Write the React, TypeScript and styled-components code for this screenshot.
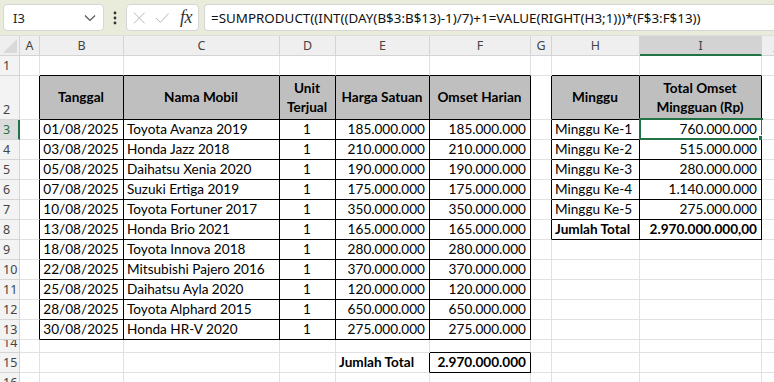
import styled, { createGlobalStyle } from "styled-components";

const GlobalStyle = createGlobalStyle`
  html, body {
    margin: 0;
    padding: 0;
    background: #fff;
    overflow: hidden;
  }
`

type CellData = {
  v: string
  align?: "left" | "center" | "right"
  bold?: boolean
  fill?: boolean
}

const COLS = ["A", "B", "C", "D", "E", "F", "G", "H", "I", "J"]
const COL_WIDTHS = [20, 84, 156, 56, 94, 101, 21, 88, 122, 30]
const ROWS = [1, 2, 3, 4, 5, 6, 7, 8, 9, 10, 11, 12, 13, 14, 15, 16]
const ROW_HEIGHT: Record<number, number> = { 2: 44, 14: 13 }

const sales = [
  ["01/08/2025", "Toyota Avanza 2019", "185.000.000"],
  ["03/08/2025", "Honda Jazz 2018", "210.000.000"],
  ["05/08/2025", "Daihatsu Xenia 2020", "190.000.000"],
  ["07/08/2025", "Suzuki Ertiga 2019", "175.000.000"],
  ["10/08/2025", "Toyota Fortuner 2017", "350.000.000"],
  ["13/08/2025", "Honda Brio 2021", "165.000.000"],
  ["18/08/2025", "Toyota Innova 2018", "280.000.000"],
  ["22/08/2025", "Mitsubishi Pajero 2016", "370.000.000"],
  ["25/08/2025", "Daihatsu Ayla 2020", "120.000.000"],
  ["28/08/2025", "Toyota Alphard 2015", "650.000.000"],
  ["30/08/2025", "Honda HR-V 2020", "275.000.000"],
]

const weekly = [
  ["Minggu Ke-1", "760.000.000"],
  ["Minggu Ke-2", "515.000.000"],
  ["Minggu Ke-3", "280.000.000"],
  ["Minggu Ke-4", "1.140.000.000"],
  ["Minggu Ke-5", "275.000.000"],
]

const cells: Record<string, CellData> = {
  B2: { v: "Tanggal", align: "center", bold: true, fill: true },
  C2: { v: "Nama Mobil", align: "center", bold: true, fill: true },
  D2: { v: "Unit Terjual", align: "center", bold: true, fill: true },
  E2: { v: "Harga Satuan", align: "center", bold: true, fill: true },
  F2: { v: "Omset Harian", align: "center", bold: true, fill: true },
  H2: { v: "Minggu", align: "center", bold: true, fill: true },
  I2: { v: "Total Omset Mingguan (Rp)", align: "center", bold: true, fill: true },
  E15: { v: "Jumlah Total", align: "left", bold: true },
  F15: { v: "2.970.000.000", align: "right", bold: true },
  H8: { v: "Jumlah Total", align: "left", bold: true },
  I8: { v: "2.970.000.000,00", align: "right", bold: true },
}

sales.forEach((s, i) => {
  const r = i + 3
  cells["B" + r] = { v: s[0], align: "center" }
  cells["C" + r] = { v: s[1], align: "left" }
  cells["D" + r] = { v: "1", align: "center" }
  cells["E" + r] = { v: s[2], align: "right" }
  cells["F" + r] = { v: s[2], align: "right" }
})

weekly.forEach((w, i) => {
  const r = i + 3
  cells["H" + r] = { v: w[0], align: "left" }
  cells["I" + r] = { v: w[1], align: "right" }
})

// ranges that carry a thin black border
const boxes = [
  { c1: 1, c2: 5, r1: 2, r2: 13 },
  { c1: 5, c2: 5, r1: 15, r2: 15 },
  { c1: 7, c2: 8, r1: 2, r2: 8 },
]

function boxed(c: number, r: number) {
  return boxes.some((b) => c >= b.c1 && c <= b.c2 && r >= b.r1 && r <= b.r2)
}

const GRID = "#e1e1e1"
const INK = "#000"

export default function App() {
  return (
    <>
      <GlobalStyle />
      <Page>
        <FormulaBar>
          <NameBox>
            <span>I3</span>
            <svg width="12" height="8" viewBox="0 0 12 8">
              <path d="M1 1.5 L6 6.5 L11 1.5" fill="none" stroke="#555" strokeWidth="1.2" />
            </svg>
          </NameBox>
          <Dots>
            <svg width="4" height="14" viewBox="0 0 4 14">
              <circle cx="2" cy="2" r="1.4" fill="#333" />
              <circle cx="2" cy="7" r="1.4" fill="#333" />
              <circle cx="2" cy="12" r="1.4" fill="#333" />
            </svg>
          </Dots>
          <FxBox>
            <svg width="14" height="14" viewBox="0 0 14 14">
              <path d="M1 1 L13 13 M13 1 L1 13" stroke="#b8b8b8" strokeWidth="1.1" />
            </svg>
            <svg width="16" height="12" viewBox="0 0 16 12">
              <path d="M1 6 L6 11 L15 1" fill="none" stroke="#b8b8b8" strokeWidth="1.1" />
            </svg>
            <Fx>fx</Fx>
          </FxBox>
          <FormulaInput>=SUMPRODUCT((INT((DAY(B$3:B$13)-1)/7)+1=VALUE(RIGHT(H3;1)))*(F$3:F$13))</FormulaInput>
        </FormulaBar>

        <Sheet>
          <Corner>
            <svg width="14" height="14" viewBox="0 0 14 14">
              <path d="M14 0 L14 14 L0 14 Z" fill="#d9d9d9" />
            </svg>
          </Corner>
          {COLS.map((c) => (
            <ColHead key={c} $active={c === "I"}>{c}</ColHead>
          ))}
          {ROWS.map((r) => (
            <RowFrag key={r} r={r} />
          ))}
        </Sheet>
      </Page>
    </>
  )
}

function RowFrag({ r }: { r: number }) {
  return (
    <>
      <RowHead $active={r === 3}>{r}</RowHead>
      {COLS.map((c, ci) => {
        const d = cells[c + r]
        const right = boxed(ci, r) || boxed(ci + 1, r) ? INK : GRID
        const bottom = boxed(ci, r) || boxed(ci, r + 1) ? INK : GRID
        return (
          <Cell
            key={c}
            $align={d?.align ?? "left"}
            $bold={!!d?.bold}
            $fill={!!d?.fill}
            $right={right}
            $bottom={bottom}
          >
            {d && <CellText $fill={!!d.fill}>{d.v}</CellText>}
            {c === "I" && r === 3 && (
              <Selection>
                <Handle />
              </Selection>
            )}
          </Cell>
        )
      })}
    </>
  )
}

const Page = styled.div`
  width: 774px;
  height: 382px;
  overflow: hidden;
  display: flex;
  flex-direction: column;
`

const FormulaBar = styled.div`
  height: 36px;
  flex: none;
  background: #e9ecda;
  display: flex;
  align-items: flex-start;
  padding: 4px 0 0 3px;
  box-sizing: border-box;
  border-bottom: 1px solid #dcdcdc;
`

const NameBox = styled.div`
  width: 101px;
  height: 27px;
  box-sizing: border-box;
  background: #fff;
  border: 1px solid #d6d6d6;
  border-radius: 4px;
  display: flex;
  align-items: center;
  justify-content: space-between;
  padding: 0 7px 0 9px;
  font-family: "Noto Sans", sans-serif;
  font-size: 13px;
  color: #222;
`

const Dots = styled.div`
  width: 22px;
  height: 27px;
  display: flex;
  align-items: center;
  justify-content: center;
`

const FxBox = styled.div`
  width: 73px;
  height: 27px;
  box-sizing: border-box;
  background: #fff;
  border: 1px solid #d6d6d6;
  border-radius: 4px;
  display: flex;
  align-items: center;
  gap: 9px;
  padding: 0 6px;
`

const Fx = styled.span`
  font-family: "Liberation Serif", serif;
  font-style: italic;
  font-size: 18px;
  color: #333;
  margin-left: 2px;
  letter-spacing: -0.5px;
`

const FormulaInput = styled.div`
  flex: 1;
  margin-left: 5px;
  height: 27px;
  box-sizing: border-box;
  background: #fff;
  border: 1px solid #d6d6d6;
  border-right: none;
  border-radius: 4px 0 0 4px;
  display: flex;
  align-items: center;
  padding-left: 6px;
  font-family: "Noto Sans", sans-serif;
  font-size: 13.4px;
  color: #111;
  white-space: nowrap;
  overflow: hidden;
`

const Sheet = styled.div`
  display: grid;
  grid-template-columns: 20px ${COL_WIDTHS.map((w) => w + "px").join(" ")};
  grid-template-rows: 20px ${ROWS.map((r) => (ROW_HEIGHT[r] ?? 20) + "px").join(" ")};
  font-family: Lato, "Open Sans", sans-serif;
  font-size: 13.6px;
  color: #000;
`

const Corner = styled.div`
  background: #efefef;
  border-right: 1px solid #d4d4d4;
  border-bottom: 1px solid #d4d4d4;
  box-sizing: border-box;
  display: flex;
  align-items: flex-end;
  justify-content: flex-end;
  padding: 0 2px 2px 0;
`

const ColHead = styled.div<{ $active: boolean }>`
  background: ${(p) => (p.$active ? "#d3d3d3" : "#efefef")};
  border-right: 1px solid #d4d4d4;
  border-bottom: ${(p) => (p.$active ? "2px solid #217346" : "1px solid #d4d4d4")};
  box-sizing: border-box;
  display: flex;
  align-items: center;
  justify-content: center;
  font-family: "Noto Sans", sans-serif;
  font-size: 12.5px;
  color: #444;
  overflow: hidden;
`

const RowHead = styled.div<{ $active: boolean }>`
  background: ${(p) => (p.$active ? "#dcdcdc" : "#f3f3f3")};
  border-right: ${(p) => (p.$active ? "2px solid #217346" : "1px solid #d4d4d4")};
  border-bottom: 1px solid #d4d4d4;
  box-sizing: border-box;
  display: flex;
  align-items: flex-end;
  padding: 0 0 1px 3px;
  overflow: hidden;
  font-family: "Noto Sans", sans-serif;
  font-size: 12.5px;
  line-height: 17px;
  color: ${(p) => (p.$active ? "#217346" : "#444")};
`

const Cell = styled.div<{
  $align: "left" | "center" | "right"
  $bold: boolean
  $fill: boolean
  $right: string
  $bottom: string
}>`
  position: relative;
  box-sizing: border-box;
  border-right: 1px solid ${(p) => p.$right};
  border-bottom: 1px solid ${(p) => p.$bottom};
  background: ${(p) => (p.$fill ? "#bfbfbf" : "#fff")};
  display: flex;
  align-items: center;
  justify-content: ${(p) =>
    p.$align === "center" ? "center" : p.$align === "right" ? "flex-end" : "flex-start"};
  text-align: ${(p) => p.$align};
  padding: 0 4px 0 3px;
  font-weight: ${(p) => (p.$bold ? 700 : 400)};
  white-space: nowrap;
  min-width: 0;
`

const CellText = styled.span<{ $fill: boolean }>`
  white-space: ${(p) => (p.$fill ? "normal" : "nowrap")};
  line-height: 19px;
`

const Selection = styled.div`
  position: absolute;
  top: -2px;
  left: -1px;
  right: -2px;
  bottom: -1px;
  border: 2px solid #217346;
  pointer-events: none;
`

const Handle = styled.div`
  position: absolute;
  right: -4px;
  bottom: -4px;
  width: 5px;
  height: 5px;
  background: #217346;
  border: 1px solid #fff;
`
